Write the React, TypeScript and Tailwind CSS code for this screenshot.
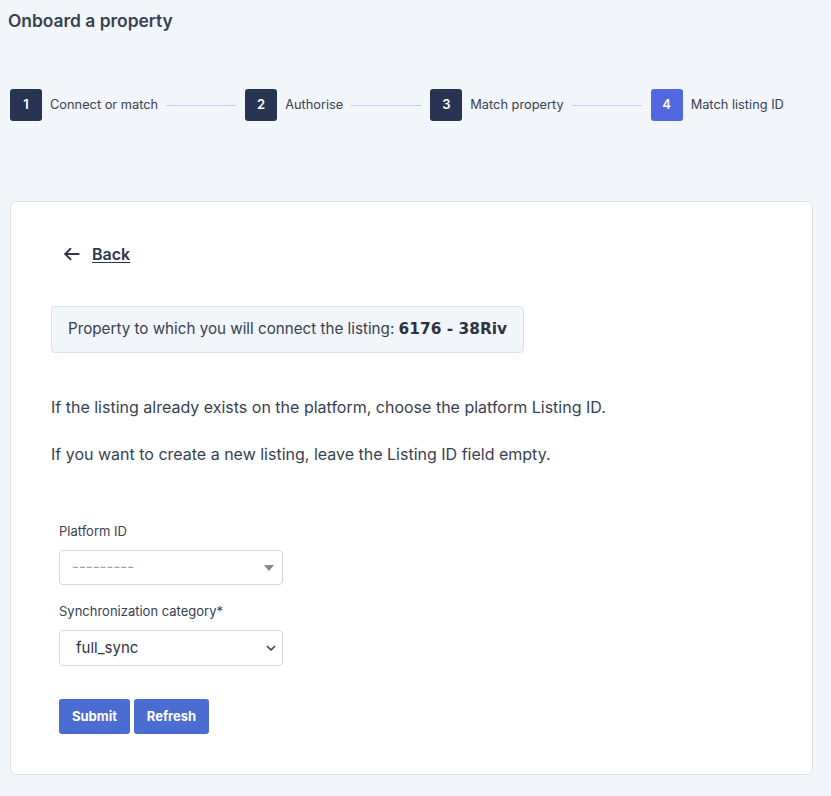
import React from "react";

const steps = [
  { n: 1, label: "Connect or match" },
  { n: 2, label: "Authorise" },
  { n: 3, label: "Match property" },
  { n: 4, label: "Match listing ID", active: true },
];

const Stepper = () => {
  return (
    <div className="flex items-center px-[10px]">
      {steps.map((s, i) => (
        <React.Fragment key={s.n}>
          <div className="flex items-center gap-2">
            <div
              className={
                s.active
                  ? "w-8 h-8 rounded-[3px] bg-[#5367e0] text-white text-[13px] font-semibold flex items-center justify-center"
                  : "w-8 h-8 rounded-[3px] bg-[#273553] text-white text-[13px] font-semibold flex items-center justify-center"
              }
            >
              {s.n}
            </div>
            <span className="text-[12.8px] text-[#374151]">{s.label}</span>
          </div>
          {i < steps.length - 1 && <div className="h-px bg-[#c3cbf3] w-[70px] ml-2 mr-[9px]"></div>}
        </React.Fragment>
      ))}
    </div>
  );
};

export default function App() {
  return (
    <div className="min-h-[796px] bg-[#f2f5fa] text-[#374151] font-['Inter','Liberation_Sans',sans-serif] pb-5">
      <h1 className="px-2 pt-[10px] text-[17.4px] leading-[22px] font-semibold text-[#374151]">Onboard a property</h1>

      <div className="mt-[57px]">
        <Stepper />
      </div>

      <div className="mx-[10px] mt-[80px] w-[803px] bg-white border border-[#dde2ea] rounded-[7px] px-10 pt-[40px] pb-[40px]">
        <a href="#" className="ml-3 flex w-fit items-center gap-[11px] text-[16px] leading-6 font-semibold text-[#2d3748]">
          <svg width="18" height="18" viewBox="0 0 24 24" fill="none" stroke="currentColor" strokeWidth="2.4" strokeLinecap="round" strokeLinejoin="round">
            <path d="M21 12H3" />
            <path d="M10 5l-7 7 7 7" />
          </svg>
          <span className="underline underline-offset-2">Back</span>
        </a>

        <div className="mt-10 flex w-fit items-center h-[47px] px-4 bg-[#f2f5fa] border border-[#dbe2ec] rounded-[4px] text-[15.2px]">
          <span>Property to which you will connect the listing:&nbsp;</span>
          <span className="font-['DejaVu_Sans',sans-serif] font-bold text-[15.4px] text-[#2d3340]">6176 - 38Riv</span>
        </div>

        <p className="mt-[42px] text-[16px] leading-6">If the listing already exists on the platform, choose the platform Listing ID.</p>
        <p className="mt-[23px] text-[16px] leading-6">If you want to create a new listing, leave the Listing ID field empty.</p>

        <form className="ml-2 mt-[55px] w-[224px]">
          <label className="block text-[13px] leading-5">Platform ID</label>
          <div className="mt-[9px] h-[35px] border border-[#d9d9d9] rounded-[4px] flex items-center justify-between pl-3 pr-[8px]">
            <span className="text-[15px] text-[#a0a0a0]">---------</span>
            <svg width="10" height="6" viewBox="0 0 10 6">
              <path d="M0 0h10L5 6z" fill="#888" />
            </svg>
          </div>

          <label className="block mt-4 text-[13px] leading-5">Synchronization category*</label>
          <div className="mt-[9px] h-[36px] border border-[#d9d9d9] rounded-[4px] flex items-center justify-between pl-4 pr-[5px]">
            <span className="text-[15px] text-[#2d3340]">full_sync</span>
            <svg width="12" height="12" viewBox="0 0 24 24" fill="none" stroke="#444" strokeWidth="3.5" strokeLinecap="round" strokeLinejoin="round">
              <path d="M5 9l7 7 7-7" />
            </svg>
          </div>

          <div className="mt-[33px] flex gap-1">
            <button type="button" className="h-[35px] w-[71px] rounded-[3px] bg-[#4b6cd0] text-white text-[13px] font-bold">Submit</button>
            <button type="button" className="h-[35px] w-[75px] rounded-[3px] bg-[#4b6cd0] text-white text-[13px] font-bold">Refresh</button>
          </div>
        </form>
      </div>
    </div>
  );
}
